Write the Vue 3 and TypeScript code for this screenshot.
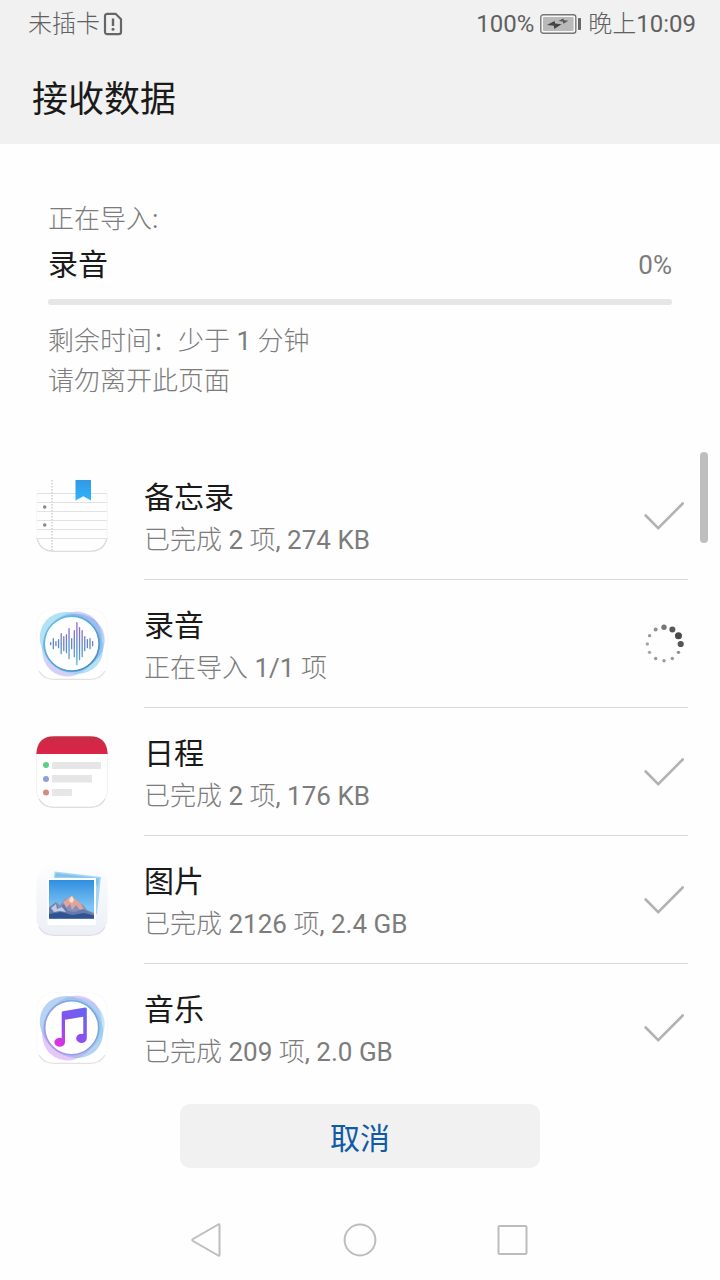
<script setup lang="ts">
import { h, type FunctionalComponent } from 'vue'

type IconKind = 'memo' | 'recorder' | 'calendar' | 'gallery' | 'music'

interface ImportItem {
  icon: IconKind
  name: string
  detail: string
  done: boolean
}

const progress = 0

const items: ImportItem[] = [
  { icon: 'memo', name: '备忘录', detail: '已完成 2 项, 274 KB', done: true },
  { icon: 'recorder', name: '录音', detail: '正在导入 1/1 项', done: false },
  { icon: 'calendar', name: '日程', detail: '已完成 2 项, 176 KB', done: true },
  { icon: 'gallery', name: '图片', detail: '已完成 2126 项, 2.4 GB', done: true },
  { icon: 'music', name: '音乐', detail: '已完成 209 项, 2.0 GB', done: true },
]

// Light Chinese text with its Latin letters and digits in regular weight.
const Mixed: FunctionalComponent<{ text: string }> = (props) =>
  props.text
    .split(/([\x20-\x7e]+)/)
    .filter((run) => run !== '')
    .map((run) => (/^[\x20-\x7e]/.test(run) ? h('span', { class: 'latin' }, run) : run))
Mixed.props = ['text']

const waveHeights = [1, 5, 2, 4, 10, 7, 9, 15, 5, 13, 21, 16, 13, 7, 4, 5, 2]
const waves = waveHeights.map((half, i) => ({
  x: 14.7 + i * 2.62,
  y1: 35.7 - half,
  y2: 35.7 + half,
}))

const dotSizes = [2.7, 3, 3.5, 3.1, 1.7, 1.7, 1.7, 1.7, 1.7, 1.7, 1.7, 2]
const dotColors = ['#777', '#585858', '#4a4a4a', '#555', '#8e8e8e', '#999', '#999', '#999', '#a5a5a5', '#a5a5a5', '#999', '#909090']
const dots = dotSizes.map((r, i) => {
  const angle = (i * Math.PI) / 6
  return {
    cx: 20 + 16.7 * Math.sin(angle),
    cy: 20 - 16.7 * Math.cos(angle),
    r,
    fill: dotColors[i],
  }
})
</script>

<template>
  <div class="screen">
    <header class="header">
      <div class="status">
        <span><Mixed text="未插卡" /></span>
        <svg class="sim" viewBox="0 0 20 24" aria-hidden="true">
          <path d="M4.2 1.8H12.6L18 7.2V20a2.2 2.2 0 0 1-2.2 2.2H4.2A2.2 2.2 0 0 1 2 20V4a2.2 2.2 0 0 1 2.2-2.2Z" fill="none" stroke="#666" stroke-width="2.2" />
          <path d="M10 6.5V14" stroke="#666" stroke-width="2.4" />
          <circle cx="10" cy="17.2" r="1.5" fill="#666" />
        </svg>
        <span class="charge"><Mixed text="100%" /></span>
        <svg class="battery" viewBox="0 0 42 22" aria-hidden="true">
          <rect x="0.8" y="1.8" width="35" height="18.4" rx="2.5" fill="#f8f8f8" stroke="#777" stroke-width="1.4" />
          <rect x="3" y="4" width="30.6" height="14" rx="1" fill="#b9b9b9" />
          <rect x="38" y="5" width="3" height="12" rx="0.8" fill="#666" />
          <path d="M7 12L14.5 8L15.2 10.5L21.5 11.3L14.3 16L13.8 12.8Z" fill="#444" />
          <path d="M18.5 8L23.3 5.6L24 7.3L28.3 7.8L23.3 10.8L22.8 8.6Z" fill="#555" />
        </svg>
        <span><Mixed text="晚上10:09" /></span>
      </div>
      <h1 class="title">接收数据</h1>
    </header>

    <section class="summary">
      <p class="note"><Mixed text="正在导入:" /></p>
      <div class="current">
        <h2 class="name">录音</h2>
        <span class="note"><Mixed :text="progress + '%'" /></span>
      </div>
      <div class="track" role="progressbar" aria-label="录音" :aria-valuenow="progress" aria-valuemin="0" aria-valuemax="100">
        <div class="fill" :style="{ width: progress + '%' }"></div>
      </div>
      <p class="note"><Mixed text="剩余时间：少于 1 分钟" /></p>
      <p class="note"><Mixed text="请勿离开此页面" /></p>
    </section>

    <main class="content">
      <ul class="list">
        <li v-for="item in items" :key="item.name" class="row">
          <svg v-if="item.icon === 'memo'" class="icon" viewBox="0 0 72 72" aria-hidden="true">
            <defs>
              <linearGradient id="mark" x1="0" y1="0" x2="0" y2="1">
                <stop offset="0" stop-color="#3398e4" />
                <stop offset="1" stop-color="#2fb4ff" />
              </linearGradient>
            </defs>
            <path d="M0.7 13V54C0.7 65 7 71.3 18 71.3H54C65 71.3 71.3 65 71.3 54V13" fill="none" stroke="#f6f6f6" stroke-width="1" />
            <path d="M1 58C3 67 9 71.3 18 71.3H54C63 71.3 69 67 71 58" fill="none" stroke="#ddd" stroke-width="1.3" />
            <path d="M1 13.5H71M1 22.5H71M1 31.5H71M1 40.5H71M1 49.5H71M2 58.5H70" stroke="#e2e2e2" stroke-width="1" />
            <path d="M16 0V71" stroke="#d8d8d8" stroke-width="1.8" stroke-dasharray="1.5 1.5" />
            <circle cx="8.7" cy="27" r="1.8" fill="#888" />
            <circle cx="8.7" cy="45" r="1.8" fill="#888" />
            <path d="M39.5 0H55V20.5L47.3 16.3L39.5 20.5Z" fill="url(#mark)" />
          </svg>

          <svg v-else-if="item.icon === 'recorder'" class="icon" viewBox="0 0 72 72" aria-hidden="true">
            <defs>
              <linearGradient id="ring" x1="0" y1="0" x2="1" y2="1">
                <stop offset="0" stop-color="#68c6e8" />
                <stop offset="1" stop-color="#4a86c2" />
              </linearGradient>
              <linearGradient id="wave" gradientUnits="userSpaceOnUse" x1="36" y1="15" x2="36" y2="57">
                <stop offset="0" stop-color="#9a63cf" />
                <stop offset="0.55" stop-color="#5b86c8" />
                <stop offset="1" stop-color="#55b5df" />
              </linearGradient>
            </defs>
            <rect x="0.7" y="0.7" width="70.6" height="70.6" rx="17" fill="#fff" stroke="#f9f9f9" />
            <path d="M3 63C6 69 11 71.3 18 71.3H54C61 71.3 66 69 69 63" fill="none" stroke="#e2e2e2" stroke-width="1.3" />
            <ellipse cx="36" cy="36" rx="34" ry="28" fill="#c6c6f5" opacity="0.8" transform="rotate(-58 36 36)" />
            <ellipse cx="35.5" cy="35" rx="34" ry="28.5" fill="#8bd3f0" opacity="0.65" transform="rotate(42 35.500 35)" />
            <ellipse cx="38" cy="34" rx="31" ry="28" fill="#6fa6e8" opacity="0.5" transform="rotate(-20 38 34)" />
            <circle cx="35.7" cy="35.7" r="27.5" fill="#fff" stroke="url(#ring)" stroke-width="1.7" />
            <line v-for="(w, i) in waves" :key="i" :x1="w.x" :x2="w.x" :y1="w.y1" :y2="w.y2" stroke="url(#wave)" stroke-width="1.3" stroke-linecap="round" />
          </svg>

          <svg v-else-if="item.icon === 'calendar'" class="icon" viewBox="0 0 72 72" aria-hidden="true">
            <defs>
              <linearGradient id="red" x1="0" y1="0" x2="0" y2="1">
                <stop offset="0" stop-color="#c92c45" />
                <stop offset="1" stop-color="#dc2348" />
              </linearGradient>
            </defs>
            <rect x="0.7" y="0.7" width="70.6" height="70.6" rx="17" fill="#fff" stroke="#f0f0f0" />
            <path d="M3 63C6 69 11 71.3 18 71.3H54C61 71.3 66 69 69 63" fill="none" stroke="#ddd" stroke-width="1.3" />
            <path d="M0.3 18C1 6 7 0.3 18 0.3H54C65 0.3 71 6 71.7 18Z" fill="url(#red)" />
            <circle cx="10" cy="29" r="3" fill="#5dce80" />
            <circle cx="10" cy="43" r="3" fill="#8ea0dc" />
            <circle cx="10" cy="56.5" r="3" fill="#d58a80" />
            <path d="M16 26H65V33H16ZM16 39H56V46.5H16ZM16 53H36V60H16Z" fill="#e6e6e6" />
          </svg>

          <svg v-else-if="item.icon === 'gallery'" class="icon" viewBox="0 0 72 72" aria-hidden="true">
            <defs>
              <linearGradient id="tile" x1="0" y1="0" x2="0" y2="1">
                <stop offset="0" stop-color="#fdfdfe" />
                <stop offset="1" stop-color="#eceff5" />
              </linearGradient>
              <linearGradient id="sky" x1="0" y1="0" x2="0" y2="1">
                <stop offset="0" stop-color="#2f8fe0" />
                <stop offset="0.7" stop-color="#7fc4f2" />
              </linearGradient>
            </defs>
            <rect x="0.5" y="0.5" width="71" height="71" rx="17" fill="url(#tile)" />
            <path d="M3 63C6 69 11 71.3 18 71.3H54C61 71.3 66 69 69 63" fill="none" stroke="#dde0e6" stroke-width="1.3" />
            <path d="M18.5 7.5L65 13L61 50L56 52L18 14Z" fill="#a6d6f5" />
            <path d="M20 9L63 14.5L62 24L58 14L19 13Z" fill="#82c1ec" />
            <rect x="11.5" y="14" width="48.5" height="47" fill="#fff" />
            <rect x="13" y="16" width="45" height="38.5" fill="url(#sky)" />
            <path d="M13 43L20 38L24 41L29 35L36 32.500L42 38L47 41L51 46L58 49V54.5H13Z" fill="#8390ba" />
            <path d="M27 38L32 34L36 32L40 36L45 40L49 47L43 45L40 41L36 46L34 40L30 44Z" fill="#e2a39b" />
            <path d="M34 34L36 32L38 36L36 39L33 37Z" fill="#fbe0d2" />
            <path d="M13 44L20 39L23 45L28 40L32 47L39 48L47 45L58 50V54.5H13Z" fill="#667aad" />
            <path d="M15 44L20 40L21 45L26 43L30 48L24 47L18 48Z" fill="#c2cbe4" />
            <path d="M13 50L25 48L36 51L48 49L58 51.5V54.5H13Z" fill="#2e5591" />
          </svg>

          <svg v-else class="icon" viewBox="0 0 72 72" aria-hidden="true">
            <defs>
              <linearGradient id="note" x1="0" y1="1" x2="0.7" y2="0">
                <stop offset="0" stop-color="#f02be0" />
                <stop offset="0.5" stop-color="#8d4fee" />
                <stop offset="1" stop-color="#6a62f2" />
              </linearGradient>
              <linearGradient id="halo" x1="0" y1="1" x2="1" y2="0">
                <stop offset="0" stop-color="#b391ec" />
                <stop offset="1" stop-color="#6caee0" />
              </linearGradient>
            </defs>
            <rect x="0.7" y="0.7" width="70.6" height="70.6" rx="17" fill="#fff" stroke="#f9f9f9" />
            <path d="M3 63C6 69 11 71.3 18 71.3H54C61 71.3 66 69 69 63" fill="none" stroke="#e2e2e2" stroke-width="1.3" />
            <ellipse cx="36" cy="36" rx="34" ry="28" fill="#e2bdf6" opacity="0.85" transform="rotate(-58 36 36)" />
            <ellipse cx="35.5" cy="35" rx="34" ry="28.5" fill="#86b6e8" opacity="0.6" transform="rotate(42 35.500 35)" />
            <ellipse cx="38" cy="34" rx="31" ry="28" fill="#86cfee" opacity="0.5" transform="rotate(-20 38 34)" />
            <circle cx="35.7" cy="35.7" r="27" fill="#fff" stroke="url(#halo)" stroke-width="1.6" />
            <path d="M25.7 20.5Q25.7 19.4 27 19.2L49.2 15.5Q50.8 15.3 50.8 17V46.3A5.3 4.6 0 1 1 47.3 42V24.8L29 27.7V50.3A5.3 4.6 0 1 1 25.7 46Z" fill="url(#note)" />
          </svg>

          <div class="body">
            <div class="text">
              <h2 class="name">{{ item.name }}</h2>
              <p class="note"><Mixed :text="item.detail" /></p>
            </div>
            <svg v-if="item.done" class="state" viewBox="0 0 40 40" role="img" aria-label="已完成">
              <path d="M1.7 19.5L14.2 32.2L38.7 7.5" fill="none" stroke="#b2b2b2" stroke-width="2.6" stroke-linecap="round" />
            </svg>
            <svg v-else class="state" viewBox="0 0 40 40" role="img" aria-label="正在导入">
              <circle v-for="(d, i) in dots" :key="i" :cx="d.cx" :cy="d.cy" :r="d.r" :fill="d.fill" />
            </svg>
          </div>
        </li>
      </ul>
      <div class="thumb" aria-hidden="true"></div>
    </main>

    <button type="button" class="cancel">取消</button>

    <nav class="nav">
      <button type="button" class="key" aria-label="返回">
        <svg viewBox="0 0 48 48"><path d="M36.5 9.2V38.8Q36.5 40.2 35.2 39.5L10 25Q8.6 24 10 23L35.2 8.5Q36.5 7.8 36.5 9.2Z" /></svg>
      </button>
      <button type="button" class="key" aria-label="主页">
        <svg viewBox="0 0 48 48"><circle cx="24" cy="24" r="15.4" /></svg>
      </button>
      <button type="button" class="key" aria-label="最近任务">
        <svg viewBox="0 0 48 48"><rect x="9.5" y="10" width="28" height="28" rx="1" /></svg>
      </button>
    </nav>
  </div>
</template>

<style>
body {
  margin: 0;
  background: #fefefe;
}

.latin {
  font-weight: 400;
}
</style>

<style scoped>
.screen {
  display: flex;
  flex-direction: column;
  min-height: 100vh;
  font-family: Roboto, "Noto Sans CJK SC", sans-serif;
  color: #1a1a1a;
}

h1,
h2,
p,
ul {
  margin: 0;
  padding: 0;
}

svg {
  display: block;
  flex: none;
}

.header {
  background: #f1f1f1;
}

.status {
  display: flex;
  align-items: center;
  height: 48px;
  padding: 0 24px 0 28px;
  font-size: 24px;
  font-weight: 300;
  line-height: 46px;
  color: #606060;
}

.sim {
  width: 20px;
  height: 24px;
  margin-left: 3px;
}

.charge {
  margin-left: auto;
}

.battery {
  width: 42px;
  height: 22px;
  margin: 0 6px;
}

.title {
  padding: 8px 32px 0;
  font-size: 36px;
  font-weight: 400;
  line-height: 88px;
}

.summary {
  padding: 55px 48px 51px;
}

.current {
  display: flex;
  align-items: center;
  justify-content: space-between;
  height: 52px;
}

.name {
  font-size: 30px;
  font-weight: 400;
  line-height: 44px;
}

.note {
  font-size: 26px;
  font-weight: 300;
  line-height: 40px;
  color: #7c7c7c;
}

.track {
  height: 6px;
  margin: 8px 0 16px;
  border-radius: 3px;
  background: #e6e6e6;
  overflow: hidden;
}

.fill {
  height: 100%;
  background: #0a59f7;
}

.content {
  position: relative;
  flex: 1;
}

.list {
  list-style: none;
}

.row {
  display: flex;
  align-items: center;
  height: 128px;
  padding: 0 32px 0 36px;
}

.icon {
  width: 72px;
  height: 72px;
  margin-right: 36px;
}

.body {
  display: flex;
  flex: 1;
  align-items: center;
  justify-content: space-between;
  box-sizing: border-box;
  height: 100%;
  padding-right: 4px;
  border-bottom: 1px solid #d8d8d8;
}

.row:last-child .body {
  border-bottom-color: transparent;
}

.text {
  padding-top: 5px;
}

.state {
  width: 40px;
  height: 40px;
}

.thumb {
  position: absolute;
  top: 0;
  right: 12px;
  width: 8px;
  height: 91px;
  border-radius: 4px;
  background: #bebebe;
}

.cancel {
  align-self: center;
  width: 50%;
  height: 64px;
  margin: 12px 0 32px;
  border: 0;
  border-radius: 10px;
  background: #f1f1f1;
  font: inherit;
  font-size: 30px;
  color: #0f5ba8;
}

.nav {
  display: flex;
  align-items: center;
  justify-content: center;
  gap: 105px;
  height: 80px;
}

.key {
  width: 48px;
  height: 48px;
  padding: 0;
  border: 0;
  background: none;
}

.key svg {
  width: 48px;
  height: 48px;
  fill: none;
  stroke: #bdbdbd;
  stroke-width: 2;
}
</style>
